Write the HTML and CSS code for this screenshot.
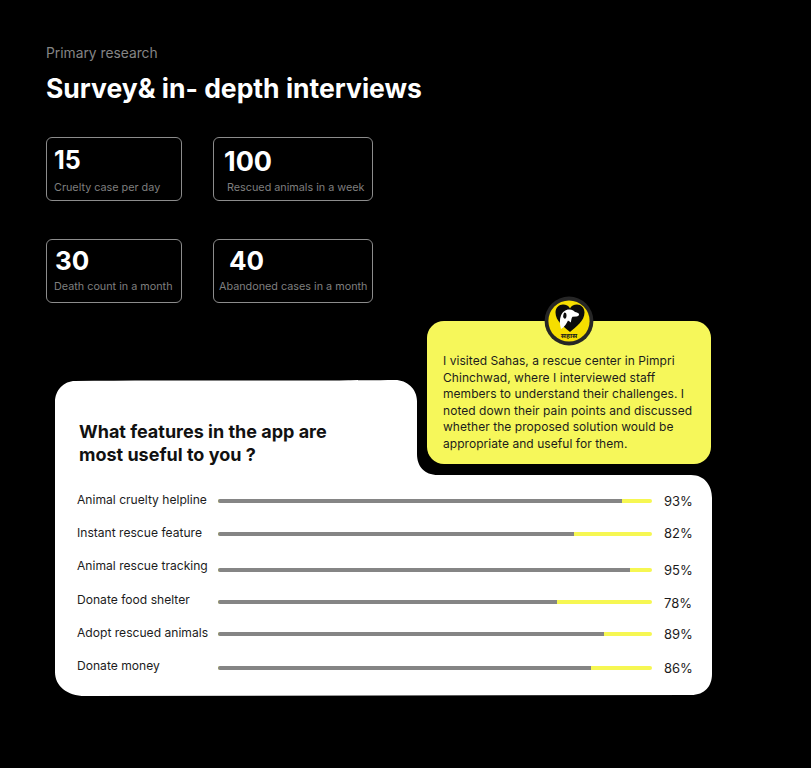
FILE: index.html
```html
<!DOCTYPE html>
<html lang="en">
<head>
<meta charset="utf-8">
<title>Primary research</title>
<link rel="stylesheet" href="styles.css">
</head>
<body>
<main class="page">
  <header class="head">
    <p class="eyebrow">Primary research</p>
    <h1 class="title">Survey&amp; in- depth interviews</h1>
  </header>

  <section class="stats">
    <div class="stat stat-a"><strong class="num">15</strong><span class="cap">Cruelty case per day</span></div>
    <div class="stat stat-b"><strong class="num num-lg">100</strong><span class="cap cap-b">Rescued animals in a week</span></div>
    <div class="stat stat-a"><strong class="num num-c">30</strong><span class="cap cap-low">Death count in a month</span></div>
    <div class="stat stat-b stat-d"><strong class="num num-d">40</strong><span class="cap cap-low">Abandoned cases in a month</span></div>
  </section>

  <section class="survey">
    <svg class="shape" width="659" height="317" viewBox="0 0 659 317" aria-hidden="true">
      <path fill="#fff" d="M20 1 C120 0 260 1 340 0 C352 0 362 9 362 21 L362 74 C362 86 369 95 383 95 L636 95 C650 95 657 106 657 118 L657 294 C657 306 650 315 636 315 L30 316 C12 316 0 306 0 292 L0 22 C0 10 9 1 20 1 Z"/>
    </svg>
    <h2 class="question">What features in the app are<br>most useful to you ?</h2>
    <ul class="rows">
      <li class="row"><span class="label">Animal cruelty helpline</span><span class="track"><span class="fill" style="width:93%"></span></span><span class="pct">93%</span></li>
      <li class="row row-up"><span class="label">Instant rescue feature</span><span class="track"><span class="fill" style="width:82%"></span></span><span class="pct">82%</span></li>
      <li class="row row-low"><span class="label">Animal rescue tracking</span><span class="track"><span class="fill" style="width:95%"></span></span><span class="pct">95%</span></li>
      <li class="row row-mid"><span class="label">Donate food shelter</span><span class="track"><span class="fill" style="width:78%"></span></span><span class="pct">78%</span></li>
      <li class="row"><span class="label">Adopt rescued animals</span><span class="track"><span class="fill" style="width:89%"></span></span><span class="pct">89%</span></li>
      <li class="row"><span class="label">Donate money</span><span class="track"><span class="fill" style="width:86%"></span></span><span class="pct">86%</span></li>
    </ul>

    <aside class="bubble">
      <svg class="logo" width="50" height="50" viewBox="0 0 50 50" aria-hidden="true">
        <circle cx="25" cy="25" r="24.4" fill="#262626"/>
        <circle cx="25" cy="25" r="20.6" fill="#f6de00"/>
        <path fill="#0b0b0b" d="M26 36 C20 31 11.500 25 11.500 16.500 C11.500 11.500 15 8.500 19 8.500 C22 8.500 25 10 26 12.500 C27 10 30 8.500 33 8.500 C37 8.500 40.500 11.500 40.500 16.500 C40.500 25 32 31 26 36 Z"/>
        <path fill="#fff" d="M17 33 C15.500 28 15.500 23 17 19.500 C18.500 16 21.500 13.500 25 13.500 C27.500 13.200 29.500 14.300 31 16 C32.500 16.300 34.500 17 35 18 C35.300 19.300 34 20.300 32.500 20.500 L28.500 20.800 C27.500 22 27.300 24 26.800 26.500 C25.500 25.500 24.800 25 24 24.500 C23 27 20.500 31 17 33 Z"/>
        <path fill="#0b0b0b" d="M20.500 16.500 C22.500 16.500 23 19.500 22 22 C21 23.500 19.400 22.500 19.200 20.500 C19.100 19 19.700 17.500 20.500 16.500 Z"/>
        <text class="logo-text" x="25" y="41.500" text-anchor="middle">सहास</text>
      </svg>
      <p class="note">I visited Sahas, a rescue center in Pimpri Chinchwad, where I interviewed staff members to understand their challenges. I noted down their pain points and discussed whether the proposed solution would be appropriate and useful for them.</p>
    </aside>
  </section>
</main>
</body>
</html>
```
FILE: styles.css
```css
* { box-sizing: border-box; }
html, body { margin: 0; padding: 0; background: #000; }
body { font-family: "Inter", "Liberation Sans", sans-serif; overflow: hidden; }

.page { width: 811px; height: 768px; padding: 44px 0 0 46px; }

.eyebrow { margin: 0; font-size: 13.800px; line-height: 18px; color: #858585; font-weight: 400; }
.title { margin: 10px 0 0; font-size: 26.500px; line-height: 32px; color: #fff; font-weight: 700; }

.stats {
  display: grid;
  grid-template-columns: 136px 160px;
  grid-auto-rows: 64px;
  column-gap: 31px;
  row-gap: 38px;
  margin-top: 33px;
}
.stat {
  display: flex;
  flex-direction: column;
  border: 1px solid #8c8c8c;
  border-radius: 6px;
  padding: 7px 7px 0;
}
.stat-b { padding-left: 10px; }
.num { font-size: 25px; line-height: 30px; font-weight: 700; color: #fff; }
.num-lg { font-size: 27px; line-height: 34px; }
.num-c { font-size: 26px; line-height: 28px; padding-left: 1px; }
.num-d { font-size: 26px; line-height: 28px; padding-left: 10px; }
.cap { font-size: 10.800px; line-height: 14px; color: #7f7f7f; margin-top: 6px; white-space: nowrap; }
.cap-b { margin-top: 2px; padding-left: 3px; }
.cap-low { margin-top: 5px; }
.stat-d { padding-left: 5px; }

.survey { position: relative; width: 659px; height: 317px; margin: 77px 0 0 9px; padding: 41px 0 0 24px; }
.shape { position: absolute; left: 0; top: 0; z-index: 0; }
.question { position: relative; margin: 0; font-size: 18px; line-height: 22.500px; font-weight: 700; color: #111; }

.rows { position: relative; list-style: none; margin: 17px 0 0 -2px; padding: 0; }
.row {
  display: grid;
  grid-template-columns: 141px 434px 39px;
  column-gap: 0;
  align-items: center;
  height: 33.300px;
}
.label { font-size: 12.100px; line-height: 16px; color: #1c1c1c; white-space: nowrap; }
.track { display: block; height: 4px; background: #f6f752; border-radius: 2px; margin-top: 3px; }
.fill { display: block; height: 4px; background: #858585; border-radius: 2px 0 0 2px; }
.pct { font-size: 13px; line-height: 18px; color: #1c1c1c; padding-left: 12px; white-space: nowrap; margin-top: 3px; }
.row-up .pct { margin-top: 1px; }
.row-low .track { margin-top: 7px; }
.row-low .pct { margin-top: 8px; }
.row-mid .track { margin-top: 5px; }
.row-mid .pct { margin-top: 6px; }

.bubble {
  position: absolute;
  left: 372px;
  top: -59px;
  width: 284px;
  height: 143px;
  background: #f6f75a;
  border-radius: 17px;
  padding: 32px 16px 0;
}
.logo { position: absolute; left: 117px; top: -25px; }
.logo-text { font-family: "Noto Sans", "DejaVu Sans", sans-serif; font-size: 7px; font-weight: 700; fill: #1a1a1a; }
.note { margin: 0; font-size: 12px; line-height: 16.500px; color: #1c1c1c; letter-spacing: 0.05px; }
```
